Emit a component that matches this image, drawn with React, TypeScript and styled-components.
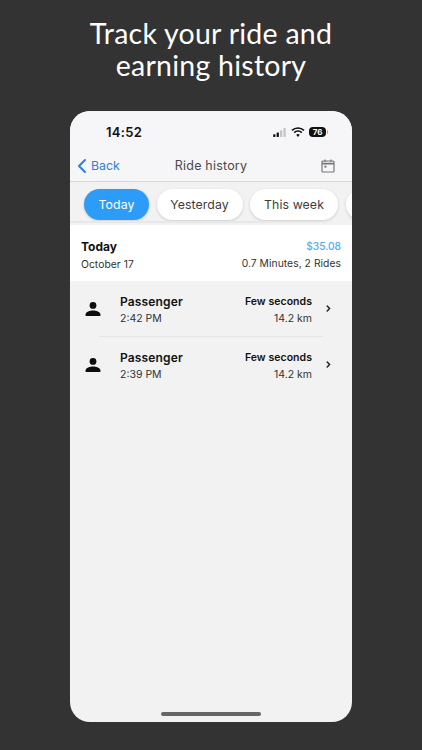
import React from "react";
import styled, { createGlobalStyle } from "styled-components";

const Global = createGlobalStyle`
  html, body { margin: 0; padding: 0; background: #333333; }
  * { box-sizing: border-box; }
`;
const Page = styled.div`
  width: 422px; height: 750px; background: #333333; overflow: hidden;
  display: flex; flex-direction: column; align-items: center;
  font-family: Inter, "Liberation Sans", sans-serif;
`;
const Headline = styled.h1`
  margin: 17px 0 0; height: 78px; width: 100%;
  font-family: Lato, sans-serif; font-weight: 400; font-size: 28.5px; line-height: 32px;
  letter-spacing: 0.25px; color: #fff; text-align: center;
`;
const Phone = styled.div`
  margin-top: 16px; width: 282px; height: 611px; border-radius: 20px; overflow: hidden;
  background: #f2f2f2; display: flex; flex-direction: column; position: relative;
`;
const StatusBar = styled.div`
  height: 39px; padding: 3px 24px 0 36px; background: #f6f6f8;
  display: flex; justify-content: space-between; align-items: center;
`;
const Clock = styled.span`font-size: 13px; font-weight: 600; color: #111; letter-spacing: .3px;`;
const StatusIcons = styled.div`display: flex; align-items: center; gap: 4px;`;
const Battery = styled.span`
  width: 17px; height: 10px; border-radius: 4px; background: #111; color: #fff;
  font-size: 8px; font-weight: 700; line-height: 10px; text-align: center; position: relative;
  margin-right: 2px;
  &::after { content: ""; position: absolute; right: -2px; top: 3px; width: 1.5px; height: 4px; background: #aaa; border-radius: 0 1px 1px 0; }
`;
const NavBar = styled.div`
  height: 32px; background: #f6f6f8; border-bottom: 1px solid #d8d8d8; padding: 0 7px;
  display: grid; grid-template-columns: 70px 1fr 70px; align-items: center;
`;
const BackLink = styled.span`display: flex; align-items: center; gap: 4px; color: #2f80d8; font-size: 12.3px;`;
const NavTitle = styled.span`font-size: 12.5px; color: #4a4a4a; letter-spacing: .2px; text-align: center;`;
const NavAction = styled.span`display: flex; justify-content: flex-end; padding-right: 10px;`;
const ChipBar = styled.div`
  height: 43px; padding: 7px 0 0 14px; display: flex; gap: 7.5px; overflow: hidden; flex: none;
  background: #f2f2f2; position: relative;
`;
const ScrollTrack = styled.div`
  position: absolute; left: 0; bottom: 2px; width: 205px; height: 2px; background: #e8e8e8;
`;
const Chip = styled.span<{ $active?: boolean; $w: number }>`
  flex: none; width: ${p => p.$w}px; height: 31px; border-radius: 16px;
  display: flex; align-items: center; justify-content: center;
  font-size: 12.3px; letter-spacing: .1px;
  background: ${p => (p.$active ? "#2d9bf8" : "#fff")};
  color: ${p => (p.$active ? "#fff" : "#3c3c3c")};
  box-shadow: 0 1px 3px rgba(0,0,0,.16);
`;
const Summary = styled.div`
  height: 56px; background: #fff; padding: 14px 11px 0;
  display: flex; justify-content: space-between;
`;
const Column = styled.div<{ $end?: boolean }>`
  display: flex; flex-direction: column; gap: 3px; align-items: ${p => (p.$end ? "flex-end" : "flex-start")};
`;
const RideColumn = styled(Column)`padding-top: 3px;`;
const SummaryTitle = styled.span`font-size: 12px; font-weight: 700; color: #111; line-height: 15px;`;
const SummarySub = styled.span`font-size: 10.3px; color: #333; line-height: 14px; letter-spacing: .05px;`;
const Amount = styled.span`font-size: 10.2px; font-weight: 500; color: #55ade9; line-height: 14px;`;
const Row = styled.div`
  height: 55px; display: flex; align-items: center; padding: 0 21px 0 15px; position: relative;
`;
const Divider = styled.div`height: 1px; background: #e6e6e6; margin: 0 29px;`;
const Avatar = styled.span`width: 35px; flex: none; display: flex;`;
const RowText = styled.div`flex: 1; display: flex; justify-content: space-between; margin-right: 14px;`;
const Name = styled.span`font-size: 12px; font-weight: 600; color: #111; line-height: 15px; letter-spacing: .15px;`;
const Duration = styled.span`font-size: 10.5px; font-weight: 600; color: #111; line-height: 15px; letter-spacing: .05px;`;
const Meta = styled.span`font-size: 10.5px; color: #333; line-height: 14px;`;
const HomeBar = styled.div`
  position: absolute; left: 91px; bottom: 6px; width: 100px; height: 4px; border-radius: 2px; background: #666;
`;

const rides = ["2:42 PM", "2:39 PM"];

const Person = () => (
  <svg width="16" height="16" viewBox="0 0 16 16" fill="#0d0d0d">
    <circle cx="8" cy="4.4" r="3.4" />
    <path d="M.6 15v-1.8C.6 10.8 5 9.4 8 9.4s7.4 1.4 7.4 3.8V15z" />
  </svg>
);

export default function App() {
  return (
    <Page>
      <Global />
      <Headline>Track your ride and<br />earning history</Headline>
      <Phone>
        <StatusBar>
          <Clock>14:52</Clock>
          <StatusIcons>
            <svg width="15" height="9" viewBox="0 0 16 10">
              <rect x="1" y="7" width="2.5" height="3" rx=".5" fill="#111" />
              <rect x="4.8" y="5" width="2.5" height="5" rx=".5" fill="#111" />
              <rect x="8.6" y="2.5" width="2.5" height="7.5" rx=".5" fill="#c4c4c4" />
              <rect x="12.4" y="0" width="2.5" height="10" rx=".5" fill="#c4c4c4" />
            </svg>
            <svg width="14" height="10" viewBox="0 0 14 10" fill="none" stroke="#111" strokeWidth="1.6">
              <path d="M1 3.4a8.6 8.6 0 0 1 12 0M3.2 5.6a5.4 5.4 0 0 1 7.6 0" />
              <path d="M7 10 5.2 7.8a2.6 2.6 0 0 1 3.6 0z" fill="#111" stroke="none" />
            </svg>
            <Battery>76</Battery>
          </StatusIcons>
        </StatusBar>
        <NavBar>
          <BackLink>
            <svg width="10" height="16" viewBox="0 0 10 16" fill="none" stroke="#2f80d8" strokeWidth="2" strokeLinecap="round" strokeLinejoin="round">
              <path d="M8 2 2 8l6 6" />
            </svg>
            Back
          </BackLink>
          <NavTitle>Ride history</NavTitle>
          <NavAction>
            <svg width="14" height="14" viewBox="0 0 14 14" fill="none" stroke="#777" strokeWidth="1.2">
              <rect x="1" y="2" width="12" height="11" rx="1" />
              <path d="M1 4.6h12" strokeWidth="1.8" />
              <path d="M4 .5v2.4M10 .5v2.4" />
              <rect x="3.4" y="6.6" width="2" height="2" fill="#777" stroke="none" />
            </svg>
          </NavAction>
        </NavBar>
        <ChipBar>
          <ScrollTrack />
          <Chip $active $w={65}>Today</Chip>
          <Chip $w={86}>Yesterday</Chip>
          <Chip $w={88}>This week</Chip>
          <Chip $w={80} />
        </ChipBar>
        <Summary>
          <Column>
            <SummaryTitle>Today</SummaryTitle>
            <SummarySub>October 17</SummarySub>
          </Column>
          <Column $end>
            <Amount>$35.08</Amount>
            <SummarySub>0.7 Minutes, 2 Rides</SummarySub>
          </Column>
        </Summary>
        {rides.map((time, i) => (
          <React.Fragment key={time}>
            {i > 0 && <Divider />}
            <Row>
              <Avatar><Person /></Avatar>
              <RowText>
                <RideColumn><Name>Passenger</Name><Meta>{time}</Meta></RideColumn>
                <RideColumn $end><Duration>Few seconds</Duration><Meta>14.2 km</Meta></RideColumn>
              </RowText>
              <svg width="5" height="7" viewBox="0 0 5 7" fill="none" stroke="#222" strokeWidth="1.5" strokeLinecap="round" strokeLinejoin="round">
                <path d="M1.2 1 3.6 3.5 1.2 6" />
              </svg>
            </Row>
          </React.Fragment>
        ))}
        <HomeBar />
      </Phone>
    </Page>
  );
}
